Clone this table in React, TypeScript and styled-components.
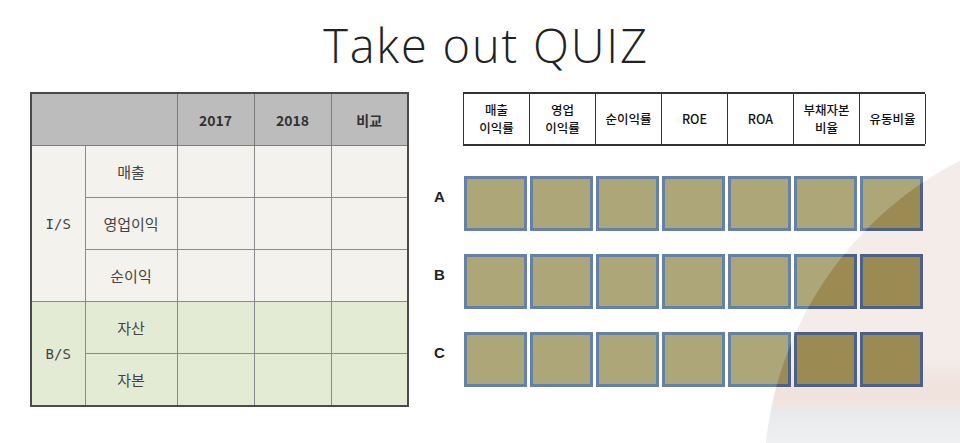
import { createGlobalStyle, styled } from "styled-components";

const CIRCLE = "circle 358px at 1122px 480px";

const GlobalStyle = createGlobalStyle`
  html, body {
    margin: 0;
    padding: 0;
    background: #fff;
  }
  body {
    font-family: "Noto Sans CJK KR", "Noto Sans", sans-serif;
    color: #222;
  }
`;

const ROWS_IS = ["매출", "영업이익", "순이익"];
const ROWS_BS = ["자산", "자본"];
const YEARS = ["2017", "2018", "비교"];

const RATIOS: string[][] = [
  ["매출", "이익률"],
  ["영업", "이익률"],
  ["순이익률"],
  ["ROE"],
  ["ROA"],
  ["부채자본", "비율"],
  ["유동비율"],
];

const COMPANIES = ["A", "B", "C"];

function App() {
  return (
    <>
      <GlobalStyle />
      <Slide>
        <Title>Take out QUIZ</Title>
        <Content>
          <SummaryTable>
            <colgroup>
              <col style={{ width: 54 }} />
              <col style={{ width: 92 }} />
              <col style={{ width: 77 }} />
              <col style={{ width: 77 }} />
              <col style={{ width: 77 }} />
            </colgroup>
            <thead>
              <tr>
                <HeadCell colSpan={2} />
                {YEARS.map((y) => (
                  <HeadCell key={y}>{y}</HeadCell>
                ))}
              </tr>
            </thead>
            <tbody>
              {ROWS_IS.map((label, i) => (
                <tr key={label}>
                  {i === 0 ? (
                    <GroupCell $tone="is" rowSpan={3}>
                      I/S
                    </GroupCell>
                  ) : null}
                  <Cell $tone="is">{label}</Cell>
                  <Cell $tone="is" />
                  <Cell $tone="is" />
                  <Cell $tone="is" />
                </tr>
              ))}
              {ROWS_BS.map((label, i) => (
                <tr key={label}>
                  {i === 0 ? (
                    <GroupCell $tone="bs" rowSpan={2}>
                      B/S
                    </GroupCell>
                  ) : null}
                  <Cell $tone="bs">{label}</Cell>
                  <Cell $tone="bs" />
                  <Cell $tone="bs" />
                  <Cell $tone="bs" />
                </tr>
              ))}
            </tbody>
          </SummaryTable>

          <Quiz>
            <span />
            <RatioHeader>
              {RATIOS.map((lines) => (
                <RatioCell key={lines.join("")}>
                  {lines.map((l) => (
                    <div key={l}>{l}</div>
                  ))}
                </RatioCell>
              ))}
            </RatioHeader>
            {COMPANIES.map((c) => (
              <CompanyRow key={c}>
                <CompanyLabel>{c}</CompanyLabel>
                <Boxes>
                  {RATIOS.map((r) => (
                    <Box key={r.join("")} />
                  ))}
                </Boxes>
              </CompanyRow>
            ))}
          </Quiz>
        </Content>
      </Slide>
    </>
  );
}

export default App;

const Slide = styled.div`
  width: 960px;
  height: 443px;
  overflow: hidden;
  background:
    radial-gradient(${CIRCLE}, transparent 357.5px, #fff 358.5px),
    linear-gradient(
      to bottom,
      #f3edea 0px,
      #f3ece8 360px,
      #f0e2dc 385px,
      #f1e4de 400px,
      #e8eaec 412px,
      #eef0f2 443px
    );
`;

const Title = styled.h1`
  margin: 0;
  padding: 22px 0 0 12px;
  height: 70px;
  box-sizing: border-box;
  text-align: center;
  font-family: "Open Sans", "Liberation Sans", sans-serif;
  font-weight: 300;
  font-size: 47px;
  line-height: 47px;
  letter-spacing: 1.8px;
  color: #222;
`;

const Content = styled.div`
  display: flex;
  align-items: flex-start;
  padding: 22px 0 0 30px;
  gap: 14px;
`;

const SummaryTable = styled.table`
  border-collapse: collapse;
  table-layout: fixed;
  width: 377px;
  border: 2px solid #4a4a4a;
`;

const HeadCell = styled.th`
  height: 51px;
  padding: 0;
  background: #bcbcbc;
  border: 1px solid #7c7c7c;
  font-size: 14px;
  font-weight: 700;
  color: #333;
  text-align: center;
`;

const Cell = styled.td<{ $tone: "is" | "bs" }>`
  height: 51px;
  padding: 0;
  background: ${(p) => (p.$tone === "is" ? "#f4f2ec" : "#e4ebd4")};
  border: 1px solid #8a8a8a;
  font-size: 15px;
  color: #444;
  text-align: center;
`;

const GroupCell = styled(Cell)`
  font-family: "DejaVu Sans Mono", "Noto Sans CJK KR", monospace;
  font-size: 14px;
`;

const Quiz = styled.div`
  display: grid;
  grid-template-columns: 40px 462px;
`;

const RatioHeader = styled.div`
  display: grid;
  grid-template-columns: repeat(7, 66px);
  height: 54px;
  border-top: 2px solid #333;
  border-bottom: 2px solid #333;
  border-left: 1px solid #333;
  box-sizing: border-box;
  margin-bottom: 30px;
`;

const RatioCell = styled.div`
  display: flex;
  flex-direction: column;
  align-items: center;
  justify-content: center;
  border-right: 1px solid #333;
  font-size: 12.5px;
  line-height: 18px;
  font-weight: 500;
  color: #111;
`;

const CompanyRow = styled.div`
  grid-column: 1 / span 2;
  display: grid;
  grid-template-columns: 40px 462px;
  align-items: center;
  margin-bottom: 23px;
`;

const CompanyLabel = styled.div`
  font-family: "Liberation Sans", sans-serif;
  font-weight: 700;
  font-size: 15px;
  color: #222;
  padding: 0 0 15px 11px;
`;

const Boxes = styled.div`
  display: grid;
  grid-template-columns: repeat(7, 66px);
`;

const Box = styled.div`
  width: 63px;
  height: 55px;
  margin-left: 1px;
  box-sizing: border-box;
  border: 3px solid transparent;
  background:
    radial-gradient(${CIRCLE}, #9b8b52 357.5px, #aca679 358.5px) padding-box fixed,
    radial-gradient(${CIRCLE}, #4d6087 357.5px, #6681a8 358.5px) border-box fixed;
`;
